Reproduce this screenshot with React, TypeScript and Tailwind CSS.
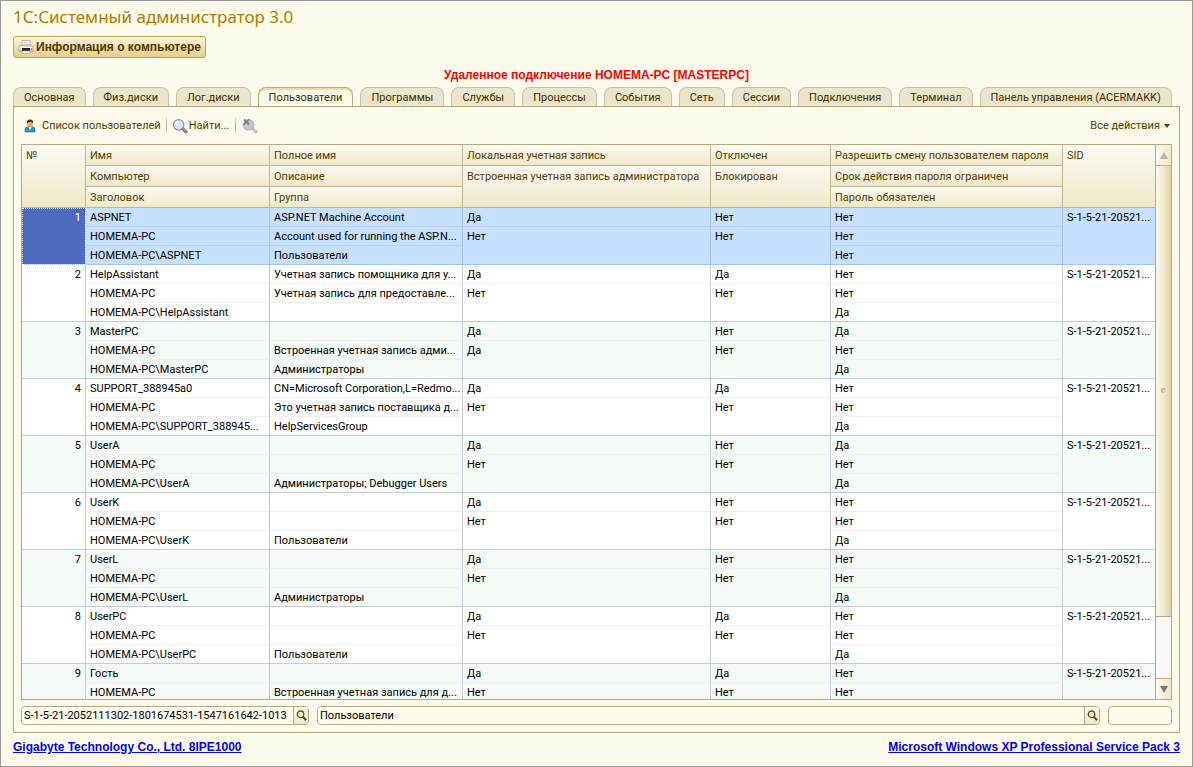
import { useState } from "react";
import { clsx } from "clsx";

const TABS = [
  "Основная",
  "Физ.диски",
  "Лог.диски",
  "Пользователи",
  "Программы",
  "Службы",
  "Процессы",
  "События",
  "Сеть",
  "Сессии",
  "Подключения",
  "Терминал",
  "Панель управления (ACERMAKK)",
];

const SID = "S-1-5-21-20521...";

type User = {
  name: string;
  caption: string;
  full: string;
  descr: string;
  group: string;
  local: string;
  builtin: string;
  disabled: string;
  locked: string;
  canChange: string;
  expires: string;
  required: string;
};

const USERS: User[] = [
  { name: "ASPNET", caption: "HOMEMA-PC\\ASPNET", full: "ASP.NET Machine Account", descr: "Account used for running the ASP.N...", group: "Пользователи", local: "Да", builtin: "Нет", disabled: "Нет", locked: "Нет", canChange: "Нет", expires: "Нет", required: "Нет" },
  { name: "HelpAssistant", caption: "HOMEMA-PC\\HelpAssistant", full: "Учетная запись помощника для у...", descr: "Учетная запись для предоставле...", group: "", local: "Да", builtin: "Нет", disabled: "Да", locked: "Нет", canChange: "Нет", expires: "Нет", required: "Да" },
  { name: "MasterPC", caption: "HOMEMA-PC\\MasterPC", full: "", descr: "Встроенная учетная запись адми...", group: "Администраторы", local: "Да", builtin: "Да", disabled: "Нет", locked: "Нет", canChange: "Да", expires: "Нет", required: "Да" },
  { name: "SUPPORT_388945a0", caption: "HOMEMA-PC\\SUPPORT_388945...", full: "CN=Microsoft Corporation,L=Redmo...", descr: "Это учетная запись поставщика д...", group: "HelpServicesGroup", local: "Да", builtin: "Нет", disabled: "Да", locked: "Нет", canChange: "Нет", expires: "Нет", required: "Да" },
  { name: "UserA", caption: "HOMEMA-PC\\UserA", full: "", descr: "", group: "Администраторы; Debugger Users", local: "Да", builtin: "Нет", disabled: "Нет", locked: "Нет", canChange: "Да", expires: "Нет", required: "Да" },
  { name: "UserK", caption: "HOMEMA-PC\\UserK", full: "", descr: "", group: "Пользователи", local: "Да", builtin: "Нет", disabled: "Нет", locked: "Нет", canChange: "Нет", expires: "Нет", required: "Да" },
  { name: "UserL", caption: "HOMEMA-PC\\UserL", full: "", descr: "", group: "Администраторы", local: "Да", builtin: "Нет", disabled: "Нет", locked: "Нет", canChange: "Нет", expires: "Нет", required: "Да" },
  { name: "UserPC", caption: "HOMEMA-PC\\UserPC", full: "", descr: "", group: "Пользователи", local: "Да", builtin: "Нет", disabled: "Да", locked: "Нет", canChange: "Нет", expires: "Нет", required: "Да" },
  { name: "Гость", caption: "", full: "", descr: "Встроенная учетная запись для д...", group: "", local: "Да", builtin: "Нет", disabled: "Да", locked: "Нет", canChange: "Нет", expires: "Нет", required: "" },
];

function PrinterIcon() {
  return (
    <svg width="16" height="16" viewBox="0 0 16 16" aria-hidden="true">
      <path d="M4 1.5h8v5H4z" fill="#fff" stroke="#b4b0a8" strokeWidth=".8" />
      <path d="M5.5 3.5h5M5.5 5h5" stroke="#d9c9a4" strokeWidth=".8" />
      <path d="M2.5 6h11l1.5 2v4.5H1V8z" fill="#d6d6d6" stroke="#a2a2a2" strokeWidth=".8" />
      <path d="M1.5 8.2h13" stroke="#fff" strokeWidth=".8" />
      <path d="M4 9h8v3H4z" fill="#222" />
      <path d="M4.5 12h7l.8 2.5H3.7z" fill="#fff" stroke="#aaa" strokeWidth=".7" />
      <circle cx="13.3" cy="10.2" r=".7" fill="#d64b3a" />
    </svg>
  );
}

function PersonIcon() {
  return (
    <svg width="12" height="14" viewBox="0 0 12 14" aria-hidden="true">
      <path d="M1 13V10.5Q1 8 4 7.8h4Q11 8 11 10.5V13z" fill="#2f8fc8" stroke="#1f6fae" strokeWidth=".6" />
      <path d="M4.2 7.8h3.6L6 11.5z" fill="#fff" />
      <ellipse cx="6" cy="4.6" rx="2.9" ry="3.4" fill="#e9a65c" />
      <path d="M3 4.6Q2.4 .6 6 .6T9 4.6Q8.4 2.6 6 2.7T3 4.6z" fill="#4a2c10" />
    </svg>
  );
}

function FindIcon({ off = false }: { off?: boolean }) {
  return (
    <svg width="16" height="16" viewBox="0 0 16 16" aria-hidden="true">
      <path d="M10.4 10.4l3.6 3.4" stroke={off ? "#c9b3ac" : "#a5604c"} strokeWidth="3" strokeLinecap="round" />
      <path d="M10.6 10l3.2 3" stroke={off ? "#ddccc5" : "#dba48e"} strokeWidth="1" strokeLinecap="round" />
      <circle cx="6.6" cy="6.8" r="5.2" fill={off ? "#c3c8d2" : "#d3e9fa"} stroke={off ? "#b3b3bc" : "#8b92ae"} strokeWidth="1.2" />
      {off ? (
        <path d="M2 1.5l5 5M7 1.5l-5 5" stroke="#937c80" strokeWidth="1.8" />
      ) : (
        <path d="M3.6 6.2Q4.4 3.8 7 3.7" stroke="#fff" strokeWidth="1.4" fill="none" />
      )}
    </svg>
  );
}

function LookupField({ label, value, className }: { label: string; value: string; className?: string }) {
  return (
    <div className={clsx("flex h-[19px] rounded border border-[#b5ab82] bg-white", className)}>
      <input
        aria-label={label}
        defaultValue={value}
        className="min-w-0 flex-1 rounded-l border border-white bg-[#fdfbee] pt-px pl-px text-black outline-none"
      />
      <button
        aria-label="Открыть"
        className="flex w-[15px] items-center justify-center rounded-r-[3px] border-l border-[#b5ab82] bg-linear-to-b from-[#fcfaf0] to-[#efe8c8]"
      >
        <svg width="11" height="11" viewBox="0 0 11 11" fill="none" stroke="#6b4e0c" aria-hidden="true">
          <circle cx="4.5" cy="4.3" r="3.3" strokeWidth="1.3" />
          <path d="M6.9 6.8l3.2 3.4" strokeWidth="2" />
        </svg>
      </button>
    </div>
  );
}

const TH = "h-[21px] truncate border-b border-r border-[#beb591] bg-linear-to-b from-[#fbfaf2] to-[#efe8c8] px-1 pt-0.5 text-left align-top leading-[18px] font-normal text-[#574000]";

function UserRows({ user, index, selected, onSelect }: { user: User; index: number; selected: boolean; onSelect: () => void }) {
  const cell = "h-[19px] overflow-hidden whitespace-nowrap border-b border-r px-1 pt-0.5 align-top leading-4";
  const side = selected ? "border-r-[#a9c4ea]" : "border-r-[#c9cdd5]";
  const thin = clsx(cell, selected ? "border-b-[#b7d0f4]" : "border-b-[#efefef]");
  const last = clsx(cell, selected ? "border-b-[#a9c4ea]" : "border-b-[#c5cbd0]");
  const tan = "border-r-[#c9c2a8]";

  return (
    <tbody className={selected ? "bg-[#c8e0ff]" : index % 2 ? "bg-white" : "bg-[#f4faf6]"} onClick={onSelect}>
      <tr>
        <td
          rowSpan={3}
          className={clsx(last, side, "text-right", selected && "bg-[#4f69c0] text-white outline-1 -outline-offset-1 outline-dotted outline-white")}
        >
          {index + 1}
        </td>
        <td className={clsx(thin, tan)}>{user.name}</td>
        <td className={clsx(thin, side)}>{user.full}</td>
        <td className={clsx(thin, side)}>{user.local}</td>
        <td className={clsx(thin, side)}>{user.disabled}</td>
        <td className={clsx(thin, side)}>{user.canChange}</td>
        <td rowSpan={3} className={clsx(last, "border-r-0")}>{SID}</td>
      </tr>
      <tr>
        <td className={clsx(thin, tan)}>HOMEMA-PC</td>
        <td className={clsx(thin, side)}>{user.descr}</td>
        <td rowSpan={2} className={clsx(last, side)}>{user.builtin}</td>
        <td rowSpan={2} className={clsx(last, side)}>{user.locked}</td>
        <td className={clsx(thin, side)}>{user.expires}</td>
      </tr>
      <tr>
        <td className={clsx(last, tan)}>{user.caption}</td>
        <td className={clsx(last, side)}>{user.group}</td>
        <td className={clsx(last, side)}>{user.required}</td>
      </tr>
    </tbody>
  );
}

function ScrollBar() {
  return (
    <div className="flex w-4 shrink-0 flex-col border-l border-[#b5ab82] bg-[#faf8f5]">
      <button aria-label="Вверх" className="flex h-[21px] shrink-0 items-center justify-center border-b border-[#beb591] bg-linear-to-r from-[#fbfaf2] to-[#efe8c8]">
        <svg width="8" height="7" viewBox="0 0 8 7" aria-hidden="true"><path d="M4 0l4 7H0z" fill="#b9b6a9" /></svg>
      </button>
      <div className="min-h-0 flex-1">
        <div className="flex h-[88%] items-center justify-center border-b border-[#b5ab82] bg-linear-to-r from-[#faf8ea] via-[#f1ebcb] to-[#ded4a8]">
          <span className="size-[5px] rounded-full border-t border-l border-[#b0a988] bg-[#dcd5b8]" />
        </div>
      </div>
      <button aria-label="Вниз" className="flex h-[21px] shrink-0 items-center justify-center border-t border-[#beb591] bg-linear-to-r from-[#fbfaf2] to-[#efe8c8]">
        <svg width="8" height="7" viewBox="0 0 8 7" aria-hidden="true"><path d="M4 7L0 0h8z" fill="#77777a" /></svg>
      </button>
    </div>
  );
}

export default function App() {
  const [tab, setTab] = useState("Пользователи");
  const [current, setCurrent] = useState(0);

  return (
    <div
      className="flex h-screen flex-col border border-[#9a9a9a] bg-[#fcfaeb] px-3 font-['Roboto','Liberation_Sans',sans-serif] text-[11px] text-black"
    >
      <header className="flex flex-col items-start pt-1">
        <h1 className="font-['Noto_Sans',Tahoma,sans-serif] text-[17px] leading-6 text-[#b07d00]">
          1С:Системный администратор 3.0
        </h1>
        <button className="mt-[7px] flex h-[22px] items-center gap-0.5 rounded-[3px] border border-[#c9a24a] bg-linear-to-b from-[#fdf5dc] via-[#f3e0ae] to-[#e6cd8c] px-1 font-['Liberation_Sans',sans-serif] text-xs font-bold text-[#4f3a00]">
          <PrinterIcon />
          Информация о компьютере
        </button>
        <p className="mt-[7px] self-center font-['Liberation_Sans',sans-serif] text-xs leading-5 font-bold text-[#ff0000]">
          Удаленное подключение HOMEMA-PC [MASTERPC]
        </p>
      </header>

      <div className="mt-0.5 flex gap-[7px]" role="tablist">
        {TABS.map((t) => (
          <button
            key={t}
            role="tab"
            aria-selected={t === tab}
            onClick={() => setTab(t)}
            className={clsx(
              "h-[19px] rounded-t-lg border border-b-0 px-2.5 pt-0.5 leading-4 whitespace-nowrap text-[#403000]",
              t === tab
                ? "relative -mb-px h-5 border-[#b5ab82] bg-[#fcfaeb] shadow-[inset_0_2px_0_#f6dc9c]"
                : "border-[#c9c2a4] bg-[#ece5cb]"
            )}
          >
            {t}
          </button>
        ))}
      </div>

      <main className="flex min-h-0 flex-1 flex-col border border-[#b5ab82] px-[7px] pb-[7px]">
        <div className="flex h-[37px] shrink-0 items-center text-[#574000]">
          <button className="flex items-center gap-1.5 pl-[3px]">
            <PersonIcon />
            <span className="pt-0.5">Список пользователей</span>
          </button>
          <span className="mx-[5px] h-5 w-px bg-linear-to-b from-transparent via-[#a89f6c] to-transparent" />
          <button className="flex items-center gap-px">
            <FindIcon />
            <span className="pt-0.5">Найти...</span>
          </button>
          <span className="mx-1.5 h-5 w-px bg-linear-to-b from-transparent via-[#a89f6c] to-transparent" />
          <button aria-label="Отменить поиск" disabled>
            <FindIcon off />
          </button>
          <button className="ml-auto flex items-center gap-1 pr-0.5">
            <span className="pt-0.5">Все действия</span>
            <svg width="6" height="4" viewBox="0 0 6 4" aria-hidden="true"><path d="M0 0h6L3 4z" fill="#574000" /></svg>
          </button>
        </div>

        <div className="flex min-h-0 flex-1 overflow-hidden border border-[#b5ab82] bg-white">
          <div className="min-w-0 flex-1 overflow-hidden">
            <table className="w-full table-fixed border-separate border-spacing-0">
              <colgroup>
                <col className="w-16" />
                <col className="w-[184px]" />
                <col className="w-[193px]" />
                <col />
                <col className="w-[120px]" />
                <col className="w-[232px]" />
                <col className="w-[92px]" />
              </colgroup>
              <thead>
                <tr>
                  <th className={TH} rowSpan={3}>№</th>
                  <th className={TH}>Имя</th>
                  <th className={TH}>Полное имя</th>
                  <th className={TH}>Локальная учетная запись</th>
                  <th className={TH}>Отключен</th>
                  <th className={TH}>Разрешить смену пользователем пароля</th>
                  <th className={clsx(TH, "border-r-0")} rowSpan={3}>SID</th>
                </tr>
                <tr>
                  <th className={TH}>Компьютер</th>
                  <th className={TH}>Описание</th>
                  <th className={TH} rowSpan={2}>Встроенная учетная запись администратора</th>
                  <th className={TH} rowSpan={2}>Блокирован</th>
                  <th className={TH}>Срок действия пароля ограничен</th>
                </tr>
                <tr>
                  <th className={TH}>Заголовок</th>
                  <th className={TH}>Группа</th>
                  <th className={TH}>Пароль обязателен</th>
                </tr>
              </thead>
              {USERS.map((u, i) => (
                <UserRows key={u.name} user={u} index={i} selected={i === current} onSelect={() => setCurrent(i)} />
              ))}
            </table>
          </div>
          <ScrollBar />
        </div>

        <div className="mt-1.5 flex shrink-0 gap-2">
          <LookupField label="SID" value="S-1-5-21-2052111302-1801674531-1547161642-1013" className="w-72" />
          <LookupField label="Группа" value="Пользователи" className="flex-1" />
          <input aria-label="Код" className="h-[19px] w-16 rounded border border-[#b5ab82] bg-[#fdfbee] px-1 shadow-[inset_0_0_0_1px_#fff] outline-none" />
        </div>
      </main>

      <footer className="flex h-[33px] shrink-0 items-start justify-between pt-[5px] font-['Liberation_Sans',sans-serif] text-xs leading-[18px] font-bold text-[#0000ff]">
        <a href="#board" className="underline">Gigabyte Technology Co., Ltd. 8IPE1000</a>
        <a href="#os" className="underline">Microsoft Windows XP Professional Service Pack 3</a>
      </footer>
    </div>
  );
}
